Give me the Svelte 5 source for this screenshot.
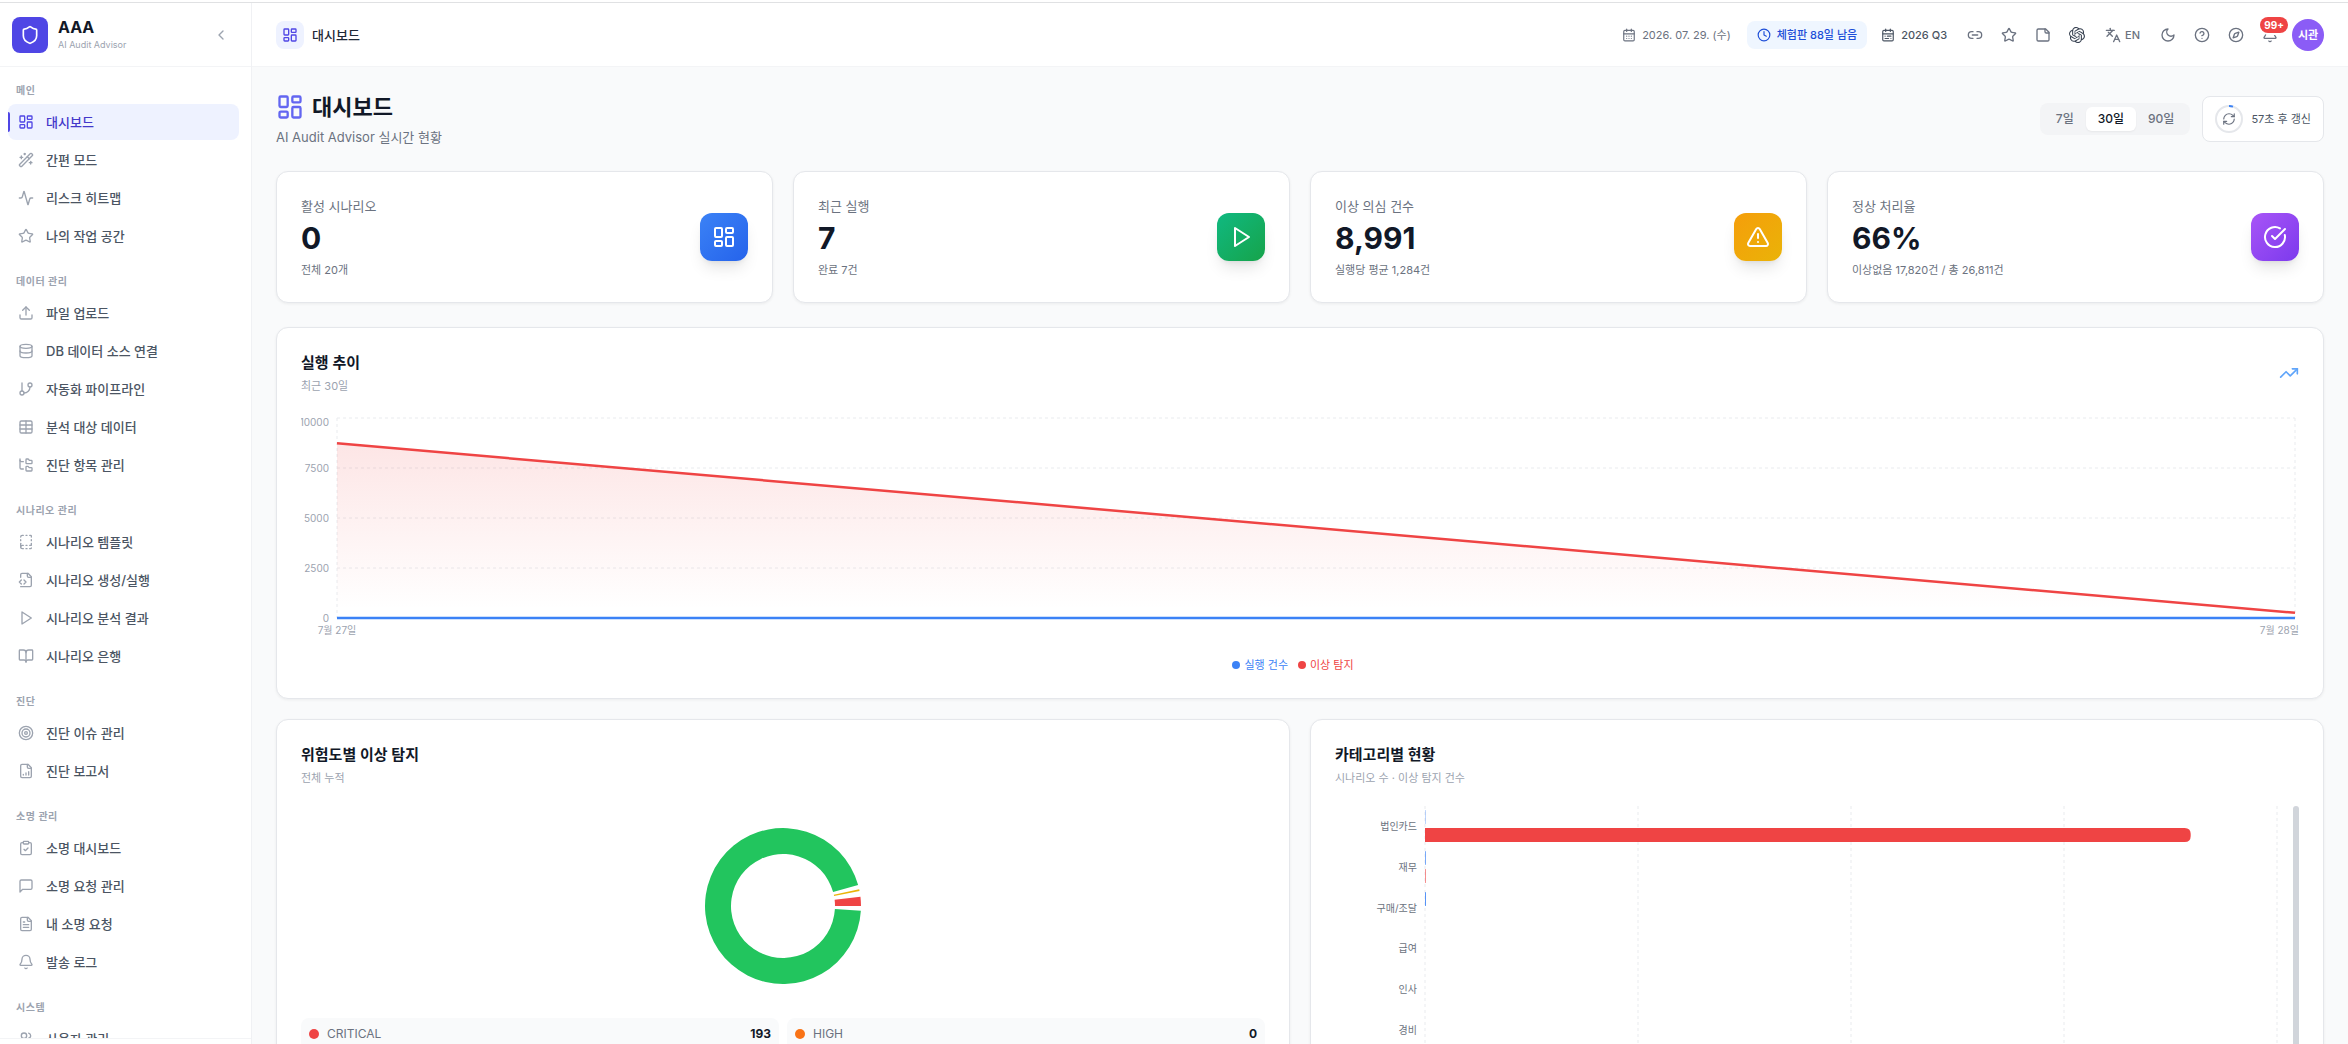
<script>
  const icons = {
    shield: '<path d="M20 13c0 5-3.5 7.5-7.66 8.95a1 1 0 0 1-.67-.01C7.5 20.5 4 18 4 13V6a1 1 0 0 1 1-1c2 0 4.5-1.2 6.24-2.72a1.17 1.17 0 0 1 1.52 0C14.51 3.81 17 5 19 5a1 1 0 0 1 1 1z"/>',
    chevronLeft: '<path d="m15 18-6-6 6-6"/>',
    dashboard: '<rect width="7" height="9" x="3" y="3" rx="1"/><rect width="7" height="5" x="14" y="3" rx="1"/><rect width="7" height="9" x="14" y="12" rx="1"/><rect width="7" height="5" x="3" y="16" rx="1"/>',
    wand: '<path d="m21.64 3.64-1.28-1.28a1.21 1.21 0 0 0-1.72 0L2.36 18.64a1.21 1.21 0 0 0 0 1.72l1.28 1.28a1.2 1.2 0 0 0 1.72 0L21.64 5.36a1.2 1.2 0 0 0 0-1.72"/><path d="m14 7 3 3"/><path d="M5 6v4"/><path d="M19 14v4"/><path d="M10 2v2"/><path d="M7 8H3"/><path d="M21 16h-4"/><path d="M11 3H9"/>',
    activity: '<path d="M22 12h-2.48a2 2 0 0 0-1.93 1.46l-2.35 8.36a.25.25 0 0 1-.48 0L9.24 2.18a.25.25 0 0 0-.48 0l-2.35 8.36A2 2 0 0 1 4.49 12H2"/>',
    star: '<path d="M11.525 2.295a.53.53 0 0 1 .95 0l2.31 4.679a2.123 2.123 0 0 0 1.595 1.16l5.166.756a.53.53 0 0 1 .294.904l-3.736 3.638a2.123 2.123 0 0 0-.611 1.878l.882 5.14a.53.53 0 0 1-.771.56l-4.618-2.428a2.122 2.122 0 0 0-1.973 0L6.396 21.01a.53.53 0 0 1-.77-.56l.881-5.139a2.122 2.122 0 0 0-.611-1.879L2.16 9.795a.53.53 0 0 1 .294-.906l5.165-.755a2.122 2.122 0 0 0 1.597-1.16z"/>',
    upload: '<path d="M21 15v4a2 2 0 0 1-2 2H5a2 2 0 0 1-2-2v-4"/><path d="m17 8-5-5-5 5"/><path d="M12 3v12"/>',
    database: '<ellipse cx="12" cy="5" rx="9" ry="3"/><path d="M3 5v14a9 3 0 0 0 18 0V5"/><path d="M3 12a9 3 0 0 0 18 0"/>',
    branch: '<path d="M6 3v12"/><circle cx="18" cy="6" r="3"/><circle cx="6" cy="18" r="3"/><path d="M18 9a9 9 0 0 1-9 9"/>',
    table: '<rect width="18" height="18" x="3" y="3" rx="2"/><path d="M12 3v18"/><path d="M3 9h18"/><path d="M3 15h18"/>',
    folderTree: '<path d="M20 10a1 1 0 0 0 1-1V6a1 1 0 0 0-1-1h-2.5a1 1 0 0 1-.8-.4l-.9-1.2A1 1 0 0 0 15 3h-2a1 1 0 0 0-1 1v5a1 1 0 0 0 1 1Z"/><path d="M20 21a1 1 0 0 0 1-1v-3a1 1 0 0 0-1-1h-2.9a1 1 0 0 1-.88-.55l-.42-.85a1 1 0 0 0-.92-.6H13a1 1 0 0 0-1 1v5a1 1 0 0 0 1 1Z"/><path d="M3 5a2 2 0 0 0 2 2h3"/><path d="M3 3v13a2 2 0 0 0 2 2h3"/>',
    template: '<path d="M12 17h1.5"/><path d="M12 22h1.5"/><path d="M12 2h1.5"/><path d="M17.5 22H19a1 1 0 0 0 1-1"/><path d="M17.5 2H19a1 1 0 0 1 1 1v1.5"/><path d="M20 14v3h-2.5"/><path d="M20 8.5V10"/><path d="M4 10V8.5"/><path d="M4 19.5V14"/><path d="M4 4.5A2.5 2.5 0 0 1 6.5 2H8"/><path d="M8 22H6.5a1 1 0 0 1 0-5H8"/>',
    fileCode: '<path d="M4 22h14a2 2 0 0 0 2-2V7l-5-5H6a2 2 0 0 0-2 2v4"/><path d="M14 2v4a2 2 0 0 0 2 2h4"/><path d="m5 12-3 3 3 3"/><path d="m9 18 3-3-3-3"/>',
    play: '<path d="M6 3 20 12 6 21z"/>',
    book: '<path d="M12 7v14"/><path d="M3 18a1 1 0 0 1-1-1V4a1 1 0 0 1 1-1h5a4 4 0 0 1 4 4 4 4 0 0 1 4-4h5a1 1 0 0 1 1 1v13a1 1 0 0 1-1 1h-6a3 3 0 0 0-3 3 3 3 0 0 0-3-3z"/>',
    target: '<circle cx="12" cy="12" r="10"/><circle cx="12" cy="12" r="6"/><circle cx="12" cy="12" r="2"/>',
    fileChart: '<path d="M15 2H6a2 2 0 0 0-2 2v16a2 2 0 0 0 2 2h12a2 2 0 0 0 2-2V7Z"/><path d="M14 2v4a2 2 0 0 0 2 2h4"/><path d="M8 18v-1"/><path d="M12 18v-3"/><path d="M16 18v-5"/>',
    clipboard: '<rect width="8" height="4" x="8" y="2" rx="1"/><path d="M16 4h2a2 2 0 0 1 2 2v14a2 2 0 0 1-2 2H6a2 2 0 0 1-2-2V6a2 2 0 0 1 2-2h2"/><path d="m9 14 2 2 4-4"/>',
    message: '<path d="M21 15a2 2 0 0 1-2 2H7l-4 4V5a2 2 0 0 1 2-2h14a2 2 0 0 1 2 2z"/>',
    fileText: '<path d="M15 2H6a2 2 0 0 0-2 2v16a2 2 0 0 0 2 2h12a2 2 0 0 0 2-2V7Z"/><path d="M14 2v4a2 2 0 0 0 2 2h4"/><path d="M10 9H8"/><path d="M16 13H8"/><path d="M16 17H8"/>',
    bell: '<path d="M10.268 21a2 2 0 0 0 3.464 0"/><path d="M3.262 15.326A1 1 0 0 0 4 17h16a1 1 0 0 0 .74-1.673C19.41 13.956 18 12.499 18 8A6 6 0 0 0 6 8c0 4.499-1.411 5.956-2.738 7.326"/>',
    users: '<path d="M16 21v-2a4 4 0 0 0-4-4H6a4 4 0 0 0-4 4v2"/><circle cx="9" cy="7" r="4"/><path d="M22 21v-2a4 4 0 0 0-3-3.87"/><path d="M16 3.13a4 4 0 0 1 0 7.75"/>',
    calendar: '<path d="M8 2v4"/><path d="M16 2v4"/><rect width="18" height="18" x="3" y="4" rx="2"/><path d="M3 10h18"/><path d="M8 14h.01"/><path d="M12 14h.01"/><path d="M16 14h.01"/><path d="M8 18h.01"/><path d="M12 18h.01"/><path d="M16 18h.01"/>',
    calendarRange: '<rect width="18" height="18" x="3" y="4" rx="2"/><path d="M16 2v4"/><path d="M3 10h18"/><path d="M8 2v4"/><path d="M17 14h-6"/><path d="M13 18H7"/><path d="M7 14h.01"/><path d="M17 18h.01"/>',
    clock: '<circle cx="12" cy="12" r="10"/><path d="M12 6v6l4 2"/>',
    link: '<path d="M9 17H7A5 5 0 0 1 7 7h2"/><path d="M15 7h2a5 5 0 1 1 0 10h-2"/><path d="M8 12h8"/>',
    note: '<path d="M16 3H5a2 2 0 0 0-2 2v14a2 2 0 0 0 2 2h14a2 2 0 0 0 2-2V8Z"/><path d="M15 3v4a2 2 0 0 0 2 2h4"/>',
    translate: '<path d="m12.9 22 4.6-10 4.6 10"/><path d="M14.5 18.5h6"/><path d="M2 5h12"/><path d="M8 2v3"/><path d="m5 8 6 6"/><path d="m3 14 6-6 3-3"/>',
    moon: '<path d="M12 3a6 6 0 0 0 9 9 9 9 0 1 1-9-9Z"/>',
    help: '<circle cx="12" cy="12" r="10"/><path d="M9.09 9a3 3 0 0 1 5.83 1c0 2-3 3-3 3"/><path d="M12 17h.01"/>',
    compass: '<circle cx="12" cy="12" r="10"/><path d="m16.24 7.76-1.804 5.411a2 2 0 0 1-1.265 1.265L7.76 16.24l1.804-5.411a2 2 0 0 1 1.265-1.265z"/>',
    refresh: '<path d="M3 12a9 9 0 0 1 9-9 9.75 9.75 0 0 1 6.74 2.74L21 8"/><path d="M21 3v5h-5"/><path d="M21 12a9 9 0 0 1-9 9 9.75 9.75 0 0 1-6.74-2.74L3 16"/><path d="M8 16H3v5"/>',
    alert: '<path d="m21.73 18-8-14a2 2 0 0 0-3.48 0l-8 14A2 2 0 0 0 4 21h16a2 2 0 0 0 1.73-3"/><path d="M12 9v4"/><path d="M12 17h.01"/>',
    check: '<path d="M21.801 10A10 10 0 1 1 17 3.335"/><path d="m9 11 3 3L22 4"/>',
    trend: '<path d="m22 7-8.5 8.5-5-5L2 17"/><path d="M16 7h6v6"/>',
  };

  const menu = [
    {
      title: '메인',
      items: [
        { icon: 'dashboard', label: '대시보드', active: true },
        { icon: 'wand', label: '간편 모드' },
        { icon: 'activity', label: '리스크 히트맵' },
        { icon: 'star', label: '나의 작업 공간' },
      ],
    },
    {
      title: '데이터 관리',
      items: [
        { icon: 'upload', label: '파일 업로드' },
        { icon: 'database', label: 'DB 데이터 소스 연결' },
        { icon: 'branch', label: '자동화 파이프라인' },
        { icon: 'table', label: '분석 대상 데이터' },
        { icon: 'folderTree', label: '진단 항목 관리' },
      ],
    },
    {
      title: '시나리오 관리',
      items: [
        { icon: 'template', label: '시나리오 템플릿' },
        { icon: 'fileCode', label: '시나리오 생성/실행' },
        { icon: 'play', label: '시나리오 분석 결과' },
        { icon: 'book', label: '시나리오 은행' },
      ],
    },
    {
      title: '진단',
      items: [
        { icon: 'target', label: '진단 이슈 관리' },
        { icon: 'fileChart', label: '진단 보고서' },
      ],
    },
    {
      title: '소명 관리',
      items: [
        { icon: 'clipboard', label: '소명 대시보드' },
        { icon: 'message', label: '소명 요청 관리' },
        { icon: 'fileText', label: '내 소명 요청' },
        { icon: 'bell', label: '발송 로그' },
      ],
    },
    {
      title: '시스템',
      items: [{ icon: 'users', label: '사용자 관리' }],
    },
  ];

  const stats = [
    { label: '활성 시나리오', value: '0', note: '전체 20개', icon: 'dashboard', tone: 'blue' },
    { label: '최근 실행', value: '7', note: '완료 7건', icon: 'play', tone: 'green' },
    { label: '이상 의심 건수', value: '8,991', note: '실행당 평균 1,284건', icon: 'alert', tone: 'amber' },
    { label: '정상 처리율', value: '66%', note: '이상없음 17,820건 / 총 26,811건', icon: 'check', tone: 'purple' },
  ];

  const periods = ['7일', '30일', '90일'];
  let period = $state('30일');

  // trend chart
  const trend = [
    { date: '7월 27일', runs: 5, anomalies: 8733 },
    { date: '7월 28일', runs: 2, anomalies: 258 },
  ];
  const trendTicks = [10000, 7500, 5000, 2500, 0];
  const plotTop = 4;
  const plotHeight = 200;
  const plotLeft = 36;
  let trendWidth = $state(1998);
  let plotRight = $derived(trendWidth - 4);

  function trendY(value) {
    return plotTop + plotHeight - (value / 10000) * plotHeight;
  }

  // donut chart
  const slices = [
    { color: '#22c55e', from: 15.6, to: 356.6 },
    { color: '#eab308', from: 11, to: 12.4 },
    { color: '#ef4444', from: 0, to: 6.8 },
  ];

  function arc({ from, to }, outer = 78, inner = 52) {
    const point = (r, deg) => {
      const a = (deg * Math.PI) / 180;
      return `${r * Math.cos(a)} ${-r * Math.sin(a)}`;
    };
    const large = to - from > 180 ? 1 : 0;
    return `M${point(outer, from)}A${outer} ${outer} 0 ${large} 0 ${point(outer, to)}L${point(inner, to)}A${inner} ${inner} 0 ${large} 1 ${point(inner, from)}Z`;
  }

  const severities = [
    { name: 'CRITICAL', count: 193, color: 'red' },
    { name: 'HIGH', count: 0, color: 'orange' },
  ];

  // category chart
  const categories = [
    { name: '법인카드', scenarios: 4, anomalies: 8987 },
    { name: '재무', scenarios: 8, anomalies: 7 },
    { name: '구매/조달', scenarios: 10, anomalies: 0 },
    { name: '급여', scenarios: 0, anomalies: 0 },
    { name: '인사', scenarios: 0, anomalies: 0 },
    { name: '경비', scenarios: 0, anomalies: 0 },
  ];
  const categoryHeight = 244;
  const categoryLeft = 90;
  let categoryWidth = $state(958);
  let barSpace = $derived(categoryWidth - categoryLeft - 16);

  function rowY(i) {
    return ((i + 0.5) * categoryHeight) / categories.length;
  }

  function barPath(value, y, height = 14) {
    const w = (value / 10000) * barSpace;
    const r = Math.min(6, w);
    return `M${categoryLeft} ${y}h${w - r}q${r} 0 ${r} ${r}v${height - 2 * r}q0 ${r} ${-r} ${r}h${r - w}z`;
  }
</script>

{#snippet icon(name, size = 16, width = 2)}
  <svg
    class="icon"
    width={size}
    height={size}
    viewBox="0 0 24 24"
    fill="none"
    stroke="currentColor"
    stroke-width={width}
    stroke-linecap="round"
    stroke-linejoin="round"
    aria-hidden="true"
  >
    {@html icons[name]}
  </svg>
{/snippet}

<div class="top-line"></div>
<div class="app">
  <aside class="sidebar">
    <div class="brand">
      <div class="brand-logo">{@render icon('shield', 20)}</div>
      <div class="brand-text">
        <strong>AAA</strong>
        <span>AI Audit Advisor</span>
      </div>
      <button class="collapse" aria-label="사이드바 접기">{@render icon('chevronLeft')}</button>
    </div>

    <nav class="menu">
      {#each menu as group}
        <section>
          <h2>{group.title}</h2>
          {#each group.items as item}
            <a href="#{item.icon}" class="menu-item" class:active={item.active}>
              {@render icon(item.icon)}
              {item.label}
            </a>
          {/each}
        </section>
      {/each}
    </nav>
    <div class="sidebar-foot"></div>
  </aside>

  <div class="body">
    <header class="topbar">
      <div class="crumb">
        <span class="crumb-icon">{@render icon('dashboard')}</span>
        <span>대시보드</span>
      </div>
      <div class="tools">
        <span class="date">{@render icon('calendar', 14)}2026. 07. 29. (수)</span>
        <span class="trial">{@render icon('clock', 14)}체험판 88일 남음</span>
        <button class="quarter">{@render icon('calendarRange', 14)}2026 Q3</button>
        <button class="tool" aria-label="링크">{@render icon('link')}</button>
        <button class="tool" aria-label="즐겨찾기">{@render icon('star')}</button>
        <button class="tool" aria-label="메모">{@render icon('note')}</button>
        <button class="tool dark" aria-label="AI">
          <svg class="icon" width="16" height="16" viewBox="0 0 24 24" fill="currentColor" aria-hidden="true">
            <path d="M22.2819 9.8211a5.9847 5.9847 0 0 0-.5157-4.9108 6.0462 6.0462 0 0 0-6.5098-2.9A6.0651 6.0651 0 0 0 4.9807 4.1818a5.9847 5.9847 0 0 0-3.9977 2.9 6.0462 6.0462 0 0 0 .7427 7.0966 5.98 5.98 0 0 0 .511 4.9107 6.051 6.051 0 0 0 6.5146 2.9001A5.9847 5.9847 0 0 0 13.2599 24a6.0557 6.0557 0 0 0 5.7718-4.2058 5.9894 5.9894 0 0 0 3.9977-2.9001 6.0557 6.0557 0 0 0-.7475-7.0729zm-9.022 12.6081a4.4755 4.4755 0 0 1-2.8764-1.0408l.1419-.0804 4.7783-2.7582a.7948.7948 0 0 0 .3927-.6813v-6.7369l2.02 1.1686a.071.071 0 0 1 .038.052v5.5826a4.504 4.504 0 0 1-4.4945 4.4944zm-9.6607-4.1254a4.4708 4.4708 0 0 1-.5346-3.0137l.142.0852 4.783 2.7582a.7712.7712 0 0 0 .7806 0l5.8428-3.3685v2.3324a.0804.0804 0 0 1-.0332.0615L9.74 19.9502a4.4992 4.4992 0 0 1-6.1408-1.6464zM2.3408 7.8956a4.485 4.485 0 0 1 2.3655-1.9728V11.6a.7664.7664 0 0 0 .3879.6765l5.8144 3.3543-2.0201 1.1685a.0757.0757 0 0 1-.071 0l-4.8303-2.7865A4.504 4.504 0 0 1 2.3408 7.872zm16.5963 3.8558L13.1038 8.364 15.1192 7.2a.0757.0757 0 0 1 .071 0l4.8303 2.7913a4.4944 4.4944 0 0 1-.6765 8.1042v-5.6772a.79.79 0 0 0-.407-.667zm2.0107-3.0231l-.142-.0852-4.7735-2.7818a.7759.7759 0 0 0-.7854 0L9.409 9.2297V6.8974a.0662.0662 0 0 1 .0284-.0615l4.8303-2.7866a4.4992 4.4992 0 0 1 6.6802 4.66zM8.3065 12.863l-2.02-1.1638a.0804.0804 0 0 1-.038-.0567V6.0742a4.4992 4.4992 0 0 1 7.3757-3.4537l-.142.0805L8.704 5.459a.7948.7948 0 0 0-.3927.6813zm1.0976-2.3654l2.602-1.4998 2.6069 1.4998v2.9994l-2.5974 1.4997-2.6067-1.4997Z" />
          </svg>
        </button>
        <button class="tool lang">{@render icon('translate')}EN</button>
        <button class="tool" aria-label="다크 모드">{@render icon('moon')}</button>
        <button class="tool" aria-label="도움말">{@render icon('help')}</button>
        <button class="tool" aria-label="가이드">{@render icon('compass')}</button>
        <button class="tool" aria-label="알림">
          {@render icon('bell')}
          <span class="badge">99+</span>
        </button>
        <button class="avatar">시관</button>
      </div>
    </header>

    <main>
      <div class="page-head">
        <div>
          <h1>{@render icon('dashboard', 28)}대시보드</h1>
          <p>AI Audit Advisor 실시간 현황</p>
        </div>
        <div class="page-actions">
          <div class="periods">
            {#each periods as p}
              <button class:selected={p === period} onclick={() => (period = p)}>{p}</button>
            {/each}
          </div>
          <button class="refresh">
            <span class="ring">
              <svg width="28" height="28" viewBox="0 0 28 28" fill="none" stroke-width="2" aria-hidden="true">
                <circle cx="14" cy="14" r="13" stroke="#e5e7eb" />
                <path d="M14 1a13 13 0 0 1 4 .6" stroke="#3b82f6" />
              </svg>
              {@render icon('refresh', 14)}
            </span>
            57초 후 갱신
          </button>
        </div>
      </div>

      <div class="stats">
        {#each stats as stat}
          <div class="card stat">
            <div>
              <p class="stat-label">{stat.label}</p>
              <p class="stat-value">{stat.value}</p>
              <p class="stat-note">{stat.note}</p>
            </div>
            <div class="stat-icon {stat.tone}">{@render icon(stat.icon, 24)}</div>
          </div>
        {/each}
      </div>

      <section class="card trend">
        <div class="card-head">
          <div>
            <h3>실행 추이</h3>
            <p>최근 30일</p>
          </div>
          <span class="trend-icon">{@render icon('trend', 20)}</span>
        </div>
        <div class="chart" bind:clientWidth={trendWidth}>
          <svg width={trendWidth} height="242">
            <defs>
              <linearGradient id="anomalyFill" x1="0" y1="0" x2="0" y2="1">
                <stop offset="5%" stop-color="#ef4444" stop-opacity="0.13" />
                <stop offset="95%" stop-color="#ef4444" stop-opacity="0" />
              </linearGradient>
            </defs>
            <g class="grid">
              {#each trendTicks as tick}
                <line x1={plotLeft} x2={plotRight} y1={trendY(tick)} y2={trendY(tick)} />
              {/each}
              <line x1={plotLeft} x2={plotLeft} y1={plotTop} y2={plotTop + plotHeight} />
              <line x1={plotRight} x2={plotRight} y1={plotTop} y2={plotTop + plotHeight} />
            </g>
            <path
              d="M{plotLeft} {trendY(trend[0].anomalies)}L{plotRight} {trendY(trend[1].anomalies)}V{trendY(0)}H{plotLeft}Z"
              fill="url(#anomalyFill)"
            />
            <line class="runs" x1={plotLeft} x2={plotRight} y1={trendY(trend[0].runs)} y2={trendY(trend[1].runs)} />
            <line class="anomalies" x1={plotLeft} x2={plotRight} y1={trendY(trend[0].anomalies)} y2={trendY(trend[1].anomalies)} />
            <g class="axis">
              {#each trendTicks as tick}
                <text x={plotLeft - 8} y={Math.max(trendY(tick), 8) + 4} text-anchor="end">{tick}</text>
              {/each}
              <text x={plotLeft} y="220" text-anchor="middle">{trend[0].date}</text>
              <text x={trendWidth} y="220" text-anchor="end">{trend[1].date}</text>
            </g>
          </svg>
        </div>
        <div class="legend">
          <span class="runs-key"><i></i>실행 건수</span>
          <span class="anomalies-key"><i></i>이상 탐지</span>
        </div>
      </section>

      <div class="panels">
        <section class="card">
          <div class="card-head">
            <div>
              <h3>위험도별 이상 탐지</h3>
              <p>전체 누적</p>
            </div>
          </div>
          <div class="donut">
            <svg width="200" height="200" viewBox="-100 -100 200 200">
              {#each slices as slice}
                <path d={arc(slice)} fill={slice.color} />
              {/each}
            </svg>
          </div>
          <div class="severities">
            {#each severities as s}
              <div class="severity">
                <i class={s.color}></i>
                <span>{s.name}</span>
                <b>{s.count}</b>
              </div>
            {/each}
          </div>
        </section>

        <section class="card">
          <div class="card-head">
            <div>
              <h3>카테고리별 현황</h3>
              <p>시나리오 수 · 이상 탐지 건수</p>
            </div>
          </div>
          <div class="category-scroll">
            <div class="chart" bind:clientWidth={categoryWidth}>
              <svg width={categoryWidth} height={categoryHeight}>
                <g class="grid">
                  {#each [0, 1, 2, 3, 4] as n}
                    <line
                      x1={categoryLeft + (n * barSpace) / 4}
                      x2={categoryLeft + (n * barSpace) / 4}
                      y1="0"
                      y2={categoryHeight}
                    />
                  {/each}
                </g>
                {#each categories as c, i}
                  <text class="category" x={categoryLeft - 8} y={rowY(i) + 4} text-anchor="end">{c.name}</text>
                  <path d={barPath(c.scenarios, Math.round(rowY(i)) - 16)} fill="#3b82f6" />
                  <path d={barPath(c.anomalies, Math.round(rowY(i)) + 2)} fill="#ef4444" />
                {/each}
              </svg>
            </div>
            <div class="scroll-thumb"></div>
          </div>
        </section>
      </div>
    </main>
  </div>
</div>

<style>
  :global(body) {
    margin: 0;
    background: #fff;
    font-family: Inter, 'Noto Sans CJK KR', sans-serif;
    line-height: 20px;
    color: #111827;
    overflow: hidden;
  }

  h1,
  h2,
  h3,
  p {
    margin: 0;
  }

  button {
    border: 0;
    padding: 0;
    background: none;
    font: inherit;
    color: inherit;
    cursor: pointer;
  }

  .icon {
    display: block;
    flex-shrink: 0;
  }

  .top-line {
    height: 2px;
    border-bottom: 1px solid #e0e1e3;
  }

  .app {
    display: flex;
    height: calc(100vh - 3px);
    overflow: hidden;
  }

  /* sidebar */
  .sidebar {
    display: flex;
    flex-direction: column;
    flex-shrink: 0;
    width: 251px;
    border-right: 1px solid #f0f1f4;
    background: #fff;
  }

  .brand {
    display: flex;
    align-items: center;
    gap: 10px;
    height: 63px;
    padding: 0 22px 0 12px;
    border-bottom: 1px solid #f3f4f6;
  }

  .brand-logo {
    display: grid;
    place-items: center;
    width: 36px;
    height: 36px;
    border-radius: 8px;
    background: #4f46e5;
    color: #fff;
  }

  .brand-text {
    display: flex;
    flex: 1;
    flex-direction: column;
  }

  .brand-text strong {
    font-size: 16px;
    line-height: 20px;
  }

  .brand-text span {
    font-size: 9px;
    line-height: 16px;
    color: #9ca3af;
  }

  .collapse {
    color: #9ca3af;
  }

  .menu {
    display: flex;
    flex: 1;
    flex-direction: column;
    gap: 20px;
    min-height: 0;
    padding: 16px 12px 0 8px;
    overflow: hidden;
  }

  .menu section {
    display: flex;
    flex-direction: column;
    flex-shrink: 0;
    gap: 2px;
  }

  .menu h2 {
    margin-bottom: 4px;
    padding-left: 8px;
    font-size: 10px;
    font-weight: 600;
    line-height: 15px;
    letter-spacing: 0.05em;
    color: #9ca3af;
  }

  .menu-item {
    position: relative;
    display: flex;
    align-items: center;
    gap: 12px;
    height: 36px;
    padding: 0 10px;
    border-radius: 8px;
    font-size: 13px;
    font-weight: 500;
    color: #4b5563;
    text-decoration: none;
  }

  .menu-item .icon {
    color: #9ca3af;
  }

  .menu-item.active {
    background: #eef2ff;
    color: #4338ca;
  }

  .menu-item.active .icon {
    color: #4f46e5;
  }

  .menu-item.active::before {
    content: '';
    position: absolute;
    left: 0;
    top: 8px;
    width: 2px;
    height: 20px;
    border-radius: 0 2px 2px 0;
    background: #4f46e5;
  }

  .sidebar-foot {
    height: 5px;
    border-top: 1px solid #f3f4f6;
  }

  /* top bar */
  .body {
    display: flex;
    flex: 1;
    flex-direction: column;
    min-width: 0;
    background: #f9fafb;
  }

  .topbar {
    display: flex;
    align-items: center;
    justify-content: space-between;
    height: 63px;
    flex-shrink: 0;
    padding: 0 24px;
    border-bottom: 1px solid #f3f4f6;
    background: #fff;
  }

  .topbar > div,
  .topbar button,
  .date,
  .trial {
    display: flex;
    align-items: center;
  }

  .crumb {
    gap: 8px;
    font-size: 13px;
    font-weight: 500;
    color: #1f2937;
  }

  .crumb-icon {
    display: grid;
    place-items: center;
    width: 28px;
    height: 28px;
    border-radius: 8px;
    background: #eef2ff;
    color: #4f46e5;
  }

  .tools {
    gap: 2px;
    font-size: 11px;
    white-space: nowrap;
  }

  .date {
    gap: 6px;
    margin-right: 14px;
    color: #6b7280;
  }

  .trial {
    gap: 6px;
    height: 28px;
    margin-right: 12px;
    padding: 0 10px;
    border-radius: 8px;
    background: #eff6ff;
    font-weight: 500;
    color: #1d4ed8;
  }

  .topbar .quarter {
    gap: 6px;
    margin-right: 10px;
    font-weight: 500;
    color: #4b5563;
  }

  .topbar .tool {
    position: relative;
    justify-content: center;
    width: 32px;
    height: 32px;
    color: #6b7280;
  }

  .topbar .tool.dark {
    color: #374151;
  }

  .topbar .tool.lang {
    gap: 4px;
    width: auto;
    padding: 0 10px;
    font-weight: 500;
  }

  .badge {
    position: absolute;
    top: -2px;
    right: -2px;
    height: 16px;
    padding: 0 4px;
    border-radius: 8px;
    background: #ef4444;
    box-shadow: 0 0 0 2px #fff;
    font-size: 10px;
    font-weight: 700;
    line-height: 16px;
    color: #fff;
  }

  .topbar .avatar {
    justify-content: center;
    width: 32px;
    height: 32px;
    margin-left: 4px;
    border-radius: 50%;
    background: #8b5cf6;
    font-weight: 700;
    color: #fff;
  }

  /* page */
  main {
    padding: 24px;
  }

  .page-head,
  .page-actions {
    display: flex;
    align-items: center;
    justify-content: space-between;
  }

  .page-head {
    margin-bottom: 24px;
  }

  h1 {
    display: flex;
    align-items: center;
    gap: 8px;
    font-size: 22px;
    font-weight: 700;
    line-height: 32px;
  }

  h1 .icon {
    color: #6366f1;
  }

  .page-head p {
    margin-top: 4px;
    font-size: 13px;
    line-height: 20px;
    color: #6b7280;
  }

  .page-actions {
    gap: 12px;
    font-size: 12px;
    font-weight: 500;
  }

  .periods {
    display: flex;
    padding: 4px;
    border-radius: 8px;
    background: #f3f4f6;
  }

  .periods button {
    height: 24px;
    padding: 0 12px;
    border-radius: 6px;
    line-height: 24px;
    color: #6b7280;
  }

  .periods .selected {
    background: #fff;
    box-shadow: 0 1px 2px rgba(0, 0, 0, 0.05);
    color: #111827;
  }

  .refresh {
    display: flex;
    align-items: center;
    gap: 8px;
    padding: 8px 12px;
    border: 1px solid #e5e7eb;
    border-radius: 8px;
    background: #fff;
    font-size: 11px;
    font-weight: 400;
    color: #4b5563;
  }

  .ring {
    display: grid;
    place-items: center;
    color: #6b7280;
  }

  .ring > :global(svg) {
    grid-area: 1 / 1;
  }

  .card {
    min-width: 0;
    padding: 24px;
    border: 1px solid #e5e7eb;
    border-radius: 12px;
    background: #fff;
    box-shadow: 0 1px 3px rgba(0, 0, 0, 0.06);
  }

  .stats {
    display: grid;
    grid-template-columns: repeat(4, 1fr);
    gap: 20px;
    margin-bottom: 24px;
  }

  .stat {
    display: flex;
    align-items: center;
    justify-content: space-between;
  }

  .stat-label {
    font-size: 13px;
    line-height: 20px;
    color: #6b7280;
  }

  .stat-value {
    margin: 4px 0 6px;
    font-size: 30px;
    font-weight: 700;
    line-height: 36px;
  }

  .stat-note {
    font-size: 11px;
    line-height: 16px;
    color: #6b7280;
  }

  .stat-icon {
    display: grid;
    place-items: center;
    width: 48px;
    height: 48px;
    border-radius: 12px;
    color: #fff;
    box-shadow: 0 10px 15px -3px rgba(0, 0, 0, 0.1), 0 4px 6px -4px rgba(0, 0, 0, 0.1);
  }

  .blue {
    background: linear-gradient(135deg, #3b82f6, #2563eb);
  }

  .green {
    background: linear-gradient(135deg, #10b981, #16a34a);
  }

  .amber {
    background: linear-gradient(135deg, #f59e0b, #eab308);
  }

  .purple {
    background: linear-gradient(135deg, #a855f7, #7c3aed);
  }

  .card-head {
    display: flex;
    align-items: center;
    justify-content: space-between;
    margin-bottom: 20px;
  }

  .card-head h3 {
    font-size: 15px;
    font-weight: 600;
    line-height: 22px;
  }

  .card-head p {
    margin-top: 4px;
    font-size: 11px;
    line-height: 16px;
    color: #9ca3af;
  }

  .trend {
    margin-bottom: 20px;
  }

  .trend-icon {
    color: #60a5fa;
  }

  .chart {
    flex: 1;
    min-width: 0;
    overflow: hidden;
  }

  .chart svg {
    display: block;
  }

  .grid line {
    stroke: #e9ebee;
    stroke-dasharray: 3 3;
  }

  .axis text,
  .category {
    font-size: 10px;
    fill: #9ca3af;
  }

  .category {
    fill: #6b7280;
  }

  .runs,
  .anomalies {
    stroke: #3b82f6;
    stroke-width: 2.5;
  }

  .anomalies {
    stroke: #ef4444;
  }

  .legend {
    display: flex;
    justify-content: center;
    gap: 10px;
    padding-right: 14px;
    font-size: 11px;
    line-height: 18px;
    color: #3b82f6;
  }

  .legend span {
    display: flex;
    align-items: center;
    gap: 4px;
  }

  .legend i {
    width: 8px;
    height: 8px;
    border-radius: 50%;
    background: currentColor;
  }

  .legend .anomalies-key {
    color: #ef4444;
  }

  .panels {
    display: grid;
    grid-template-columns: 1fr 1fr;
    gap: 20px;
  }

  .donut {
    display: flex;
    justify-content: center;
    margin-bottom: 12px;
  }

  .donut svg {
    display: block;
  }

  .severities {
    display: grid;
    grid-template-columns: 1fr 1fr;
    gap: 8px;
  }

  .severity {
    display: flex;
    align-items: center;
    gap: 8px;
    padding: 8px;
    border-radius: 8px;
    background: #f9fafb;
    font-size: 12px;
    line-height: 16px;
    color: #6b7280;
  }

  .severity i {
    width: 10px;
    height: 10px;
    border-radius: 50%;
  }

  .severity b {
    margin-left: auto;
    color: #111827;
  }

  .red {
    background: #ef4444;
  }

  .orange {
    background: #f97316;
  }

  .category-scroll {
    display: flex;
  }

  .scroll-thumb {
    width: 6px;
    border-radius: 3px;
    background: #d1d5db;
  }
</style>
